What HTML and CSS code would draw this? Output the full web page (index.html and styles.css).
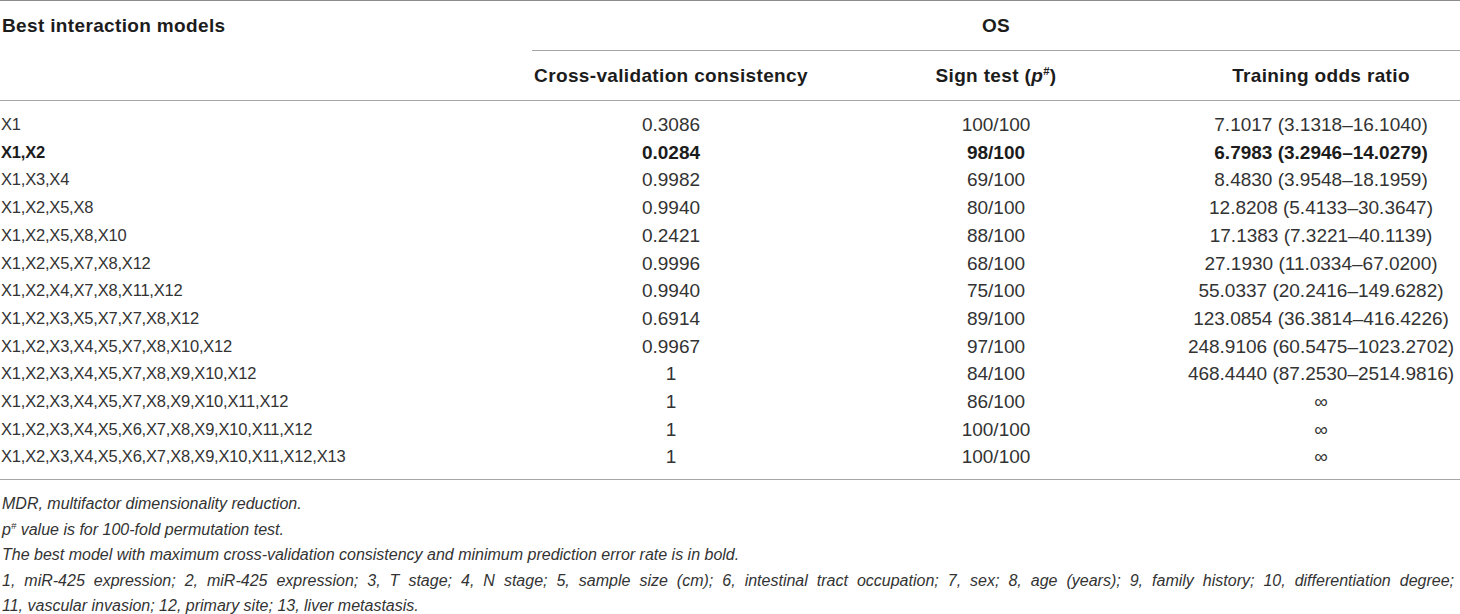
FILE: index.html
```html
<!DOCTYPE html>
<html>
<head>
<meta charset="utf-8">
<link rel="stylesheet" href="styles.css">
</head>
<body>
<div class="wrap">
<table class="mdr">
  <colgroup>
    <col class="c1"><col class="c2"><col class="c3"><col class="c4">
  </colgroup>
  <thead>
    <tr class="h1">
      <th class="left" rowspan="2">Best interaction models</th>
      <th class="os" colspan="3">OS</th>
    </tr>
    <tr class="h2">
      <th>Cross-validation consistency</th>
      <th>Sign test (<i>p</i><sup>#</sup>)</th>
      <th>Training odds ratio</th>
    </tr>
  </thead>
  <tbody>
    <tr class="first"><td class="left">X1</td><td>0.3086</td><td>100/100</td><td>7.1017 (3.1318–16.1040)</td></tr>
    <tr class="best"><td class="left">X1,X2</td><td>0.0284</td><td>98/100</td><td>6.7983 (3.2946–14.0279)</td></tr>
    <tr><td class="left">X1,X3,X4</td><td>0.9982</td><td>69/100</td><td>8.4830 (3.9548–18.1959)</td></tr>
    <tr><td class="left">X1,X2,X5,X8</td><td>0.9940</td><td>80/100</td><td>12.8208 (5.4133–30.3647)</td></tr>
    <tr><td class="left">X1,X2,X5,X8,X10</td><td>0.2421</td><td>88/100</td><td>17.1383 (7.3221–40.1139)</td></tr>
    <tr><td class="left">X1,X2,X5,X7,X8,X12</td><td>0.9996</td><td>68/100</td><td>27.1930 (11.0334–67.0200)</td></tr>
    <tr><td class="left">X1,X2,X4,X7,X8,X11,X12</td><td>0.9940</td><td>75/100</td><td>55.0337 (20.2416–149.6282)</td></tr>
    <tr><td class="left">X1,X2,X3,X5,X7,X7,X8,X12</td><td>0.6914</td><td>89/100</td><td>123.0854 (36.3814–416.4226)</td></tr>
    <tr><td class="left">X1,X2,X3,X4,X5,X7,X8,X10,X12</td><td>0.9967</td><td>97/100</td><td>248.9106 (60.5475–1023.2702)</td></tr>
    <tr><td class="left">X1,X2,X3,X4,X5,X7,X8,X9,X10,X12</td><td>1</td><td>84/100</td><td>468.4440 (87.2530–2514.9816)</td></tr>
    <tr><td class="left">X1,X2,X3,X4,X5,X7,X8,X9,X10,X11,X12</td><td>1</td><td>86/100</td><td>∞</td></tr>
    <tr><td class="left">X1,X2,X3,X4,X5,X6,X7,X8,X9,X10,X11,X12</td><td>1</td><td>100/100</td><td>∞</td></tr>
    <tr class="last"><td class="left">X1,X2,X3,X4,X5,X6,X7,X8,X9,X10,X11,X12,X13</td><td>1</td><td>100/100</td><td>∞</td></tr>
  </tbody>
</table>
<div class="notes">
  <p>MDR, multifactor dimensionality reduction.</p>
  <p><i>p</i><sup>#</sup> value is for 100-fold permutation test.</p>
  <p>The best model with maximum cross-validation consistency and minimum prediction error rate is in bold.</p>
  <p class="key"><span class="just">1, miR-425 expression; 2, miR-425 expression; 3, T stage; 4, N stage; 5, sample size (cm); 6, intestinal tract occupation; 7, sex; 8, age (years); 9, family history; 10, differentiation degree;</span><span>11, vascular invasion; 12, primary site; 13, liver metastasis.</span></p>
</div>
</div>
</body>
</html>
```

FILE: styles.css
```css
html, body {
  margin: 0;
  padding: 0;
  background: #ffffff;
}
body {
  font-family: "Liberation Sans", Arial, sans-serif;
  color: #333333;
  width: 1460px;
  overflow: hidden;
}
.wrap {
  width: 1460px;
}
.mdr {
  width: 1460px;
  border-collapse: collapse;
  table-layout: fixed;
  border-top: 1px solid #8c8c8c;
  border-bottom: 1px solid #a6a6a6;
}
.c1 { width: 532px; }
.c2 { width: 278px; }
.c3 { width: 372px; }
.c4 { width: 278px; }

th {
  font-weight: bold;
  font-size: 19px;
  letter-spacing: 0.35px;
  color: #1c1c1c;
  text-align: center;
  padding: 0;
  white-space: nowrap;
}
.h1 th { height: 49px; vertical-align: middle; }
.h1 th.left { vertical-align: top; padding-top: 14px; }
.h2 th { height: 49px; vertical-align: middle; }
.left { text-align: left; padding-left: 2px; }
th.os { border-bottom: 1px solid #a6a6a6; }
thead .h2 { border-bottom: 1px solid #a6a6a6; }

sup {
  font-size: 0.6em;
  line-height: 0;
  vertical-align: 0.6em;
}

td {
  font-size: 19px;
  line-height: 27.7px;
  padding: 0;
  text-align: center;
  white-space: nowrap;
}
td.left {
  text-align: left;
  padding-left: 1px;
  font-size: 16.5px;
  letter-spacing: -0.2px;
}
tr.first td { padding-top: 10px; }
tr.last td { padding-bottom: 8px; }
tr.best td { font-weight: bold; color: #1c1c1c; }

.notes {
  padding-top: 11px;
  padding-left: 2px;
  width: 1452px;
}
.notes p {
  margin: 0;
  font-style: italic;
  font-size: 16px;
  line-height: 25.5px;
  white-space: nowrap;
}
.notes p.key span {
  display: block;
}
.notes p.key .just {
  text-align: justify;
  text-align-last: justify;
  white-space: normal;
}
```
